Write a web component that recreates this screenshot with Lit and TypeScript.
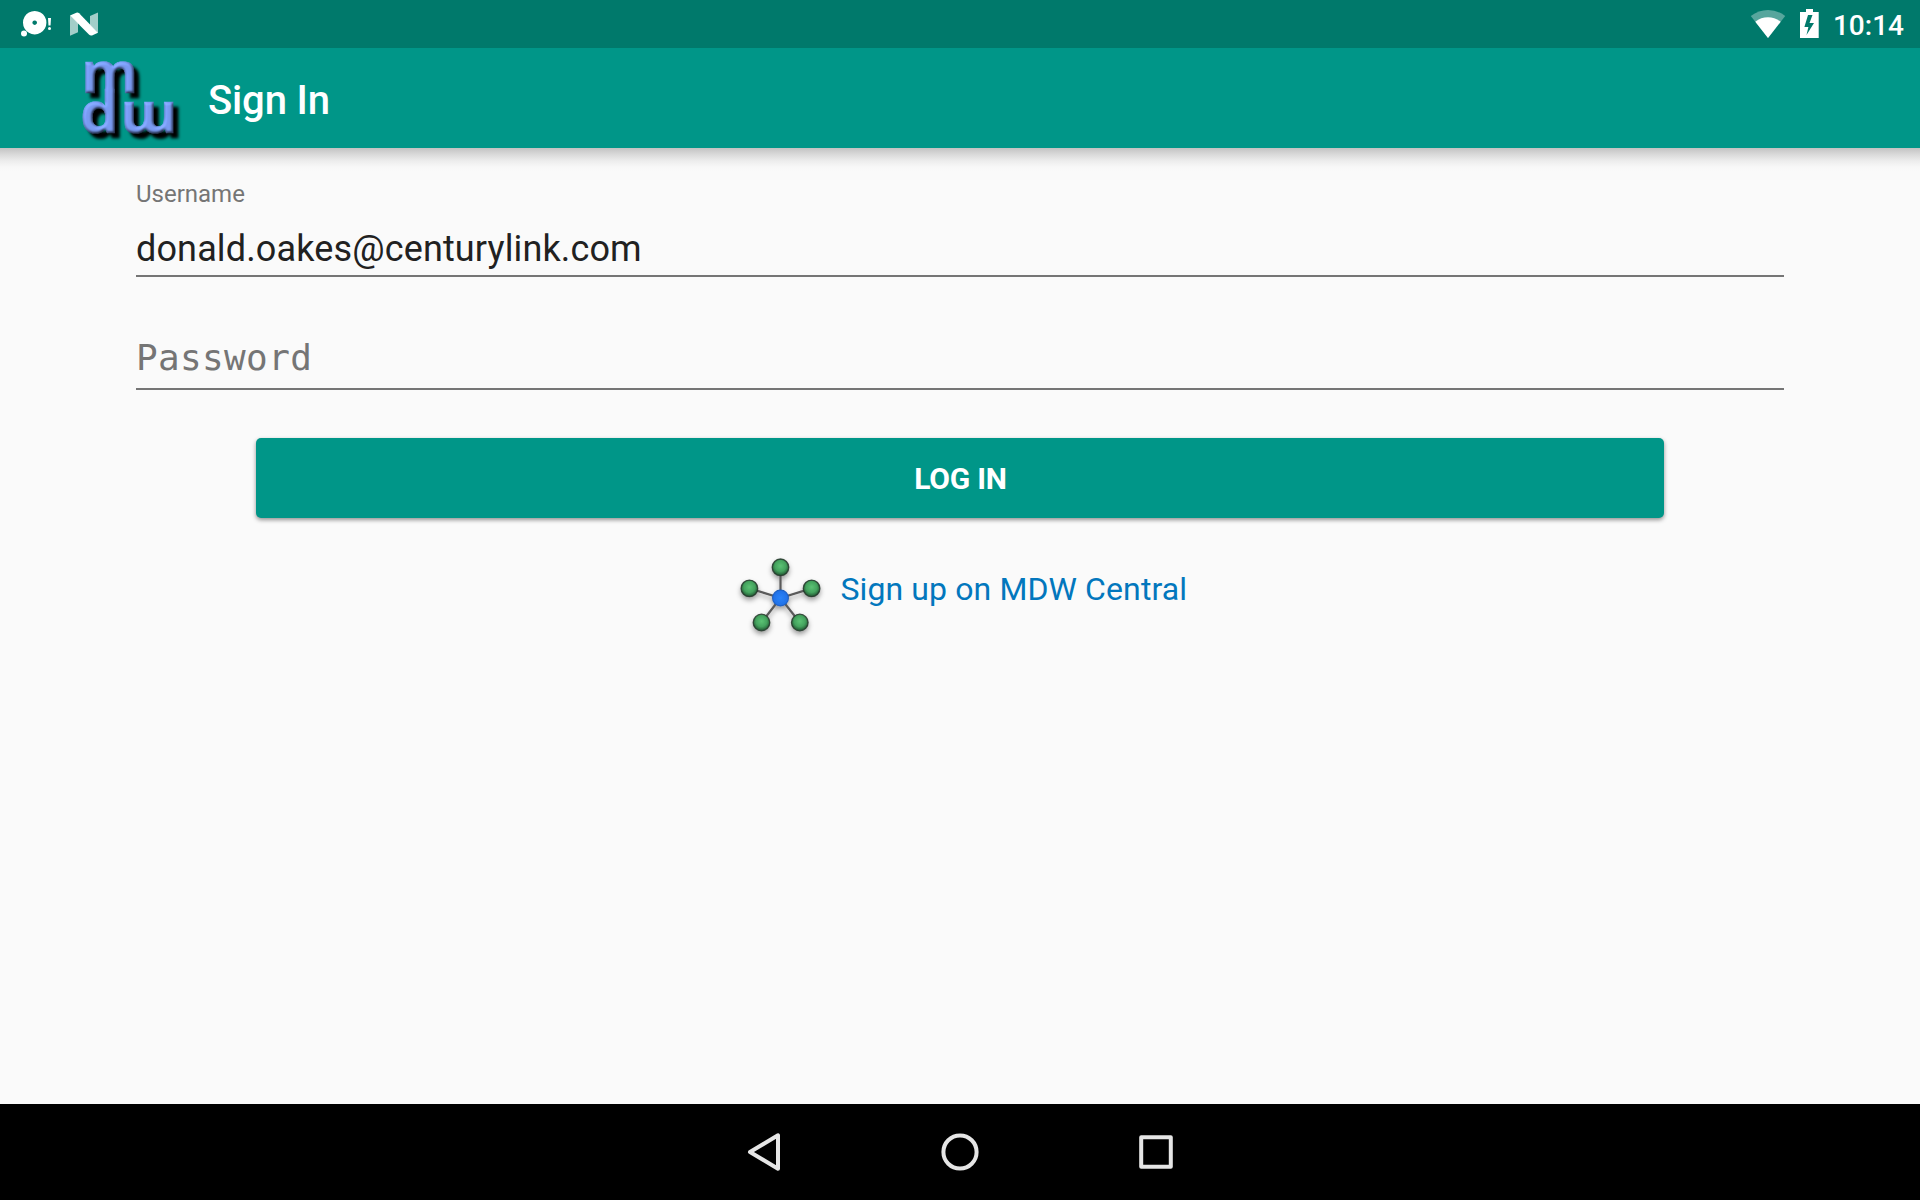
import { LitElement, html, svg, css } from "lit";
import { customElement, property } from "lit/decorators.js";

@customElement("status-bar")
class StatusBar extends LitElement {
  static styles = css`
    :host {
      display: flex;
      align-items: center;
      justify-content: space-between;
      height: 48px;
      background: #00796b;
      color: #fff;
    }
    .icons {
      display: block;
    }
    .right {
      display: flex;
      align-items: center;
      padding-right: 16px;
      gap: 13px;
    }
    .clock {
      font: 500 28px/48px Roboto, sans-serif;
      padding-top: 2px;
      height: 46px;
    }
  `;

  render() {
    return html`
      <svg class="icons" width="110" height="48" viewBox="0 0 110 48" fill="#fff">
        <path fill-rule="evenodd" d="M34.7 11a11.7 11.7 0 1 0 .01 0zM34.7 20.4a2.3 2.3 0 1 1-.01 0z" />
        <circle cx="24" cy="33.5" r="3" />
        <path d="M48 18h3l-.5 7.5h-2z" />
        <circle cx="49.5" cy="28.6" r="1.5" />
        <path opacity=".64" d="M70 15.5v20.2l8-3.4V23zM90 16l8-3.6v20.6l-8-8z" />
        <path d="M70 15.4l6.3-2.7q1.6-.6 2.8.6L98 32.8l-6 2.6q-1.6.6-2.8-.6z" />
      </svg>
      <div class="right">
        <svg class="icons" width="72" height="48" viewBox="1748 0 72 48" fill="#fff">
          <path opacity=".34" d="M1768 38L1750.8 16Q1758.5 10 1768 10T1785.2 16z" />
          <path d="M1768 38L1755.3 21.7Q1761 17.3 1768 17.3T1780.7 21.7z" />
          <path
            fill-rule="evenodd"
            d="M1806 9h7v3h5.7v26H1800V12h6zM1808 15l-3.6 12h4l-1.9 8 7.5-12h-4.5l3-8z"
          />
        </svg>
        <div class="clock">10:14</div>
      </div>
    `;
  }
}

@customElement("mdw-logo")
class MdwLogo extends LitElement {
  static styles = css`
    :host {
      display: block;
    }
    .logo {
      display: block;
      overflow: visible;
    }
    .glyph {
      font: 700 58px "Noto Sans", sans-serif;
    }
  `;

  render() {
    return html`
      <svg class="logo" width="106" height="100" viewBox="76 48 106 100" role="img" aria-label="mdw">
        <defs>
          <filter id="bevel" x="70" y="48" width="120" height="100" filterUnits="userSpaceOnUse" color-interpolation-filters="sRGB">
            <feGaussianBlur in="SourceAlpha" stdDeviation="1.6" result="soft" />
            <feDiffuseLighting in="soft" surfaceScale="2.2" diffuseConstant="1.15" lighting-color="#7898ee" result="lit">
              <feDistantLight azimuth="235" elevation="62" />
            </feDiffuseLighting>
            <feComposite in="lit" in2="SourceAlpha" operator="in" result="face" />
            <feGaussianBlur in="SourceAlpha" stdDeviation="1.7" />
            <feOffset dx="5" dy="5" result="shadow" />
            <feMerge>
              <feMergeNode in="shadow" />
              <feMergeNode in="face" />
            </feMerge>
          </filter>
        </defs>
        <g filter="url(#bevel)" fill="#000" stroke="#000" stroke-width=".7">
          <text class="glyph" x="81.5" y="93.3">m</text>
          <text class="glyph" transform="translate(80 133.3) scale(1.06 1)">d</text>
          <text class="glyph" transform="rotate(180 148.5 117.5)" x="119.8" y="133.2">m</text>
        </g>
      </svg>
    `;
  }
}

@customElement("text-field")
class TextField extends LitElement {
  @property() label = "";
  @property() value = "";
  @property() hint = "";

  static styles = css`
    :host {
      display: flex;
      flex-direction: column;
      border-bottom: 2px solid #757575;
      font-family: Roboto, sans-serif;
    }
    .label {
      font-size: 24px;
      line-height: 30px;
      color: #757575;
    }
    .value {
      font-size: 36px;
      line-height: 42px;
      letter-spacing: 0.14px;
      padding: 19px 0 5px;
      color: #212121;
    }
    .hint {
      font: 36px/42px "DejaVu Sans Mono", monospace;
      letter-spacing: 0.35px;
      padding: 60px 0 9px;
      color: #757575;
    }
  `;

  render() {
    return this.value
      ? html`<div class="label">${this.label}</div>
          <div class="value">${this.value}</div>`
      : html`<div class="hint">${this.hint}</div>`;
  }
}

const OUTER_NODES = [
  [780.5, 567.3],
  [749.4, 588.4],
  [811.6, 588.4],
  [761.5, 622.5],
  [799.8, 622.5],
];

@customElement("central-icon")
class CentralIcon extends LitElement {
  static styles = css`
    :host,
    .icon {
      display: block;
    }
  `;

  render() {
    return html`
      <svg class="icon" width="96" height="96" viewBox="731 550 96 96">
        <defs>
          <radialGradient id="green" cx=".5" cy=".42" r=".6">
            <stop offset="0" stop-color="#5cc274" />
            <stop offset=".55" stop-color="#44a35e" />
            <stop offset="1" stop-color="#1d4a2c" />
          </radialGradient>
          <radialGradient id="blue" cx=".5" cy=".5" r=".55">
            <stop offset="0" stop-color="#2b83f8" />
            <stop offset=".7" stop-color="#2273ea" />
            <stop offset="1" stop-color="#1a4c9c" />
          </radialGradient>
          <filter id="drop" x="-20%" y="-20%" width="140%" height="150%">
            <feDropShadow dx="0" dy="3" stdDeviation="2.5" flood-color="#000" flood-opacity=".38" />
          </filter>
        </defs>
        <g filter="url(#drop)">
          ${OUTER_NODES.map(
            ([x, y]) => svg`<line x1="780.5" y1="598" x2=${x} y2=${y} stroke="#5a5a5a" stroke-width="2.2" />`
          )}
          ${OUTER_NODES.map(
            ([x, y]) => svg`<circle cx=${x} cy=${y} r="8.3" fill="url(#green)" stroke="#26382c" stroke-opacity=".85" stroke-width="1.3" />`
          )}
          <circle cx="780.5" cy="598" r="8.5" fill="url(#blue)" />
        </g>
      </svg>
    `;
  }
}

@customElement("nav-bar")
class NavBar extends LitElement {
  static styles = css`
    :host {
      display: flex;
      justify-content: center;
      align-items: center;
      gap: 148px;
      height: 96px;
      background: #000;
    }
    .key {
      display: block;
      fill: none;
      stroke: #e6e6e6;
      stroke-width: 4;
      stroke-linejoin: round;
    }
  `;

  render() {
    return html`
      <svg class="key" width="48" height="48" viewBox="740 1128 48 48"><path d="M750 1152L778 1135.3V1168.7z" /></svg>
      <svg class="key" width="48" height="48" viewBox="936 1128 48 48"><circle cx="960" cy="1152" r="16.6" /></svg>
      <svg class="key" width="48" height="48" viewBox="1132 1128 48 48"><path d="M1141.2 1137.2h29.6v29.6h-29.6z" /></svg>
    `;
  }
}

@customElement("app-root")
class AppRoot extends LitElement {
  static styles = css`
    :host {
      display: flex;
      flex-direction: column;
      height: 1200px;
      background: #fafafa;
      font-family: Roboto, sans-serif;
    }
    .toolbar {
      display: flex;
      align-items: center;
      height: 100px;
      padding-left: 76px;
      gap: 26px;
      background: #009688;
    }
    .title {
      margin: 0;
      padding-top: 6px;
      font-size: 40px;
      line-height: 48px;
      letter-spacing: -0.15px;
      font-weight: 500;
      color: #fff;
    }
    .content {
      flex: 1;
      display: flex;
      flex-direction: column;
      padding: 31px 136px 0;
      background: linear-gradient(#c2c2c2, #d8d8d8 6px, #ededed 13px, #f8f8f8 19px, #fafafa 24px) no-repeat 0 0 / 100% 24px;
    }
    .login {
      height: 80px;
      margin: 48px 120px 0;
      padding: 2px 0 0 1px;
      border: 0;
      border-radius: 5px;
      background: #009688;
      box-shadow: 0 2px 4px rgba(0, 0, 0, 0.42);
      color: #fff;
      font: 700 30px/40px Roboto, sans-serif;
      letter-spacing: -0.2px;
    }
    .signup {
      display: flex;
      align-self: center;
      margin-top: 32px;
      padding-right: 1.4px;
      gap: 13px;
      color: #0277bd;
      font-size: 32px;
      line-height: 40px;
      letter-spacing: 0.11px;
      text-decoration: none;
    }
    .link {
      padding-top: 19px;
    }
  `;

  render() {
    return html`
      <status-bar></status-bar>
      <header class="toolbar">
        <mdw-logo></mdw-logo>
        <h1 class="title">Sign In</h1>
      </header>
      <main class="content">
        <text-field label="Username" value="donald.oakes@centurylink.com"></text-field>
        <text-field hint="Password"></text-field>
        <button class="login">LOG IN</button>
        <a class="signup"><central-icon></central-icon><span class="link">Sign up on MDW Central</span></a>
      </main>
      <nav-bar></nav-bar>
    `;
  }
}
